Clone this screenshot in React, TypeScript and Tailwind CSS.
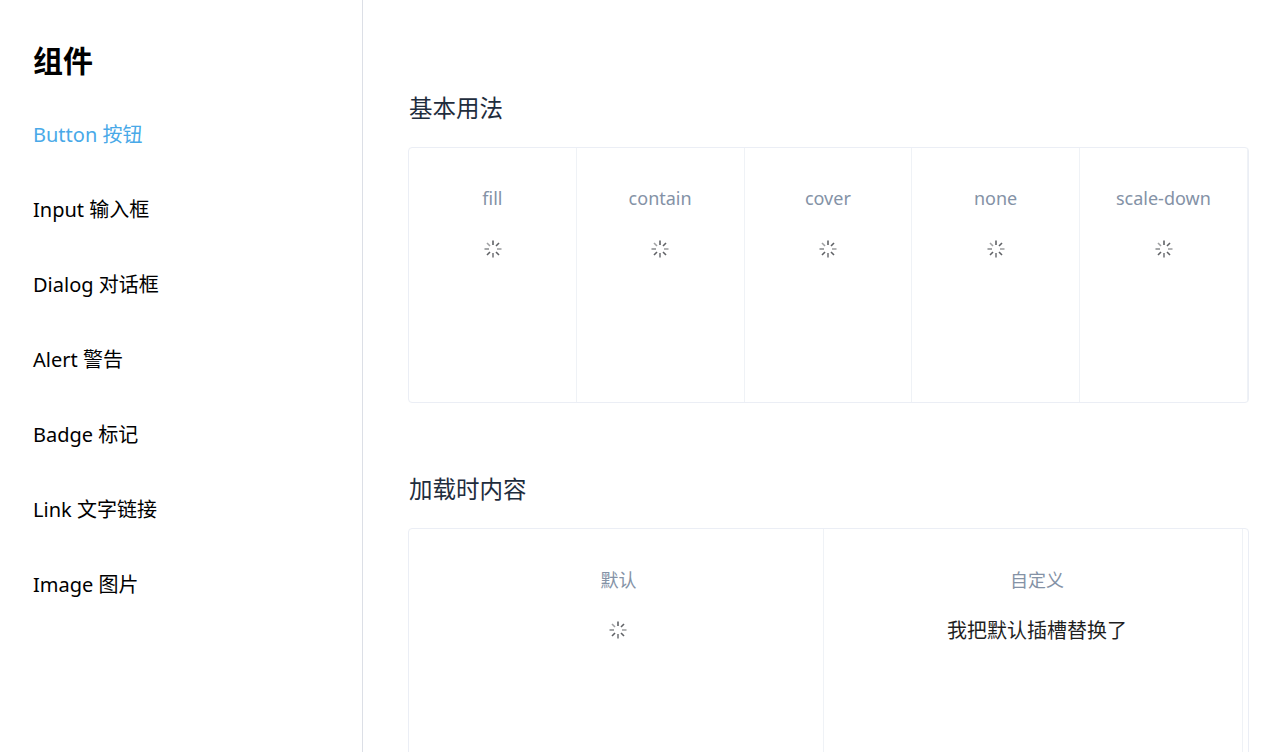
import React from 'react'

const navItems = ['Button 按钮', 'Input 输入框', 'Dialog 对话框', 'Alert 警告', 'Badge 标记', 'Link 文字链接', 'Image 图片']
const fits = ['fill', 'contain', 'cover', 'none', 'scale-down']

const Spinner = () => (
    <svg width="18" height="18" viewBox="0 0 18 18" className="block" stroke="#606266" strokeWidth="1.6" fill="none">
        <path d="M9 0.5v4.5" />
        <path d="M9 13v4.5" opacity="0.85" />
        <path d="M0.5 9h4.5" opacity="0.7" />
        <path d="M13 9h4.5" opacity="0.6" />
        <path d="M3 3l3 3" opacity="0.6" />
        <path d="M12 12l3 3" />
        <path d="M15 3l-3 3" />
        <path d="M6 12l-3 3" />
    </svg>
)

const Cell = ({ label, className, labelClass, slotClass, children }: { label: string; className: string; labelClass: string; slotClass: string; children?: React.ReactNode }) => (
    <div className={`flex flex-col items-center border-r border-[#eff2f6] ${className}`}>
        <span className={`text-[18px] leading-[26px] text-[#8492a6] ${labelClass}`}>{label}</span>
        <div className={`flex h-[48px] items-start justify-center ${slotClass}`}>{children}</div>
    </div>
)

const App = () => {
    return (
        <div className="flex h-[752px] w-full overflow-hidden bg-white font-['Noto_Sans','Noto_Sans_CJK_SC',sans-serif]">
            <aside className="w-[363px] shrink-0 border-r border-[#dcdfe6] pl-[33px] pt-[37px]">
                <h1 className="text-[30px] leading-[48px] font-bold text-black">组件</h1>
                <nav className="mt-[12px] flex flex-col">
                    {navItems.map((item, i) => (
                        <a key={item} className={`h-[75px] text-[20px] leading-[75px] ${i === 0 ? 'text-[#49a9e8]' : 'text-black'}`}>
                            {item}
                        </a>
                    ))}
                </nav>
            </aside>
            <main className="flex-1 pl-[45px] pr-[32px] pt-[90px]">
                <h2 className="pl-px text-[23.5px] leading-[36px] text-[#1f2d3d]">基本用法</h2>
                <div className="mt-[21px] flex h-[256px] rounded-[4px] border border-[#ebeef5]">
                    {fits.map((fit) => (
                        <Cell key={fit} label={fit} className="w-[167.75px]" labelClass="mt-[37px]" slotClass="mt-[29px] pl-[0.4px]">
                            <Spinner />
                        </Cell>
                    ))}
                </div>
                <h2 className="mt-[68px] pl-px text-[23.5px] leading-[36px] text-[#1f2d3d]">加载时内容</h2>
                <div className="mt-[21px] flex h-[300px] rounded-[4px] border border-[#ebeef5]">
                    <Cell label="默认" className="w-[415px] pl-[5px]" labelClass="mt-[38px]" slotClass="mt-[28px] pr-[2px]">
                        <Spinner />
                    </Cell>
                    <Cell label="自定义" className="w-[419px] pl-[8px]" labelClass="mt-[38px]" slotClass="mt-[28px]">
                        <span className="text-[20px] leading-[20px] text-[#1f1f1f]">我把默认插槽替换了</span>
                    </Cell>
                </div>
            </main>
        </div>
    )
}

export default App
